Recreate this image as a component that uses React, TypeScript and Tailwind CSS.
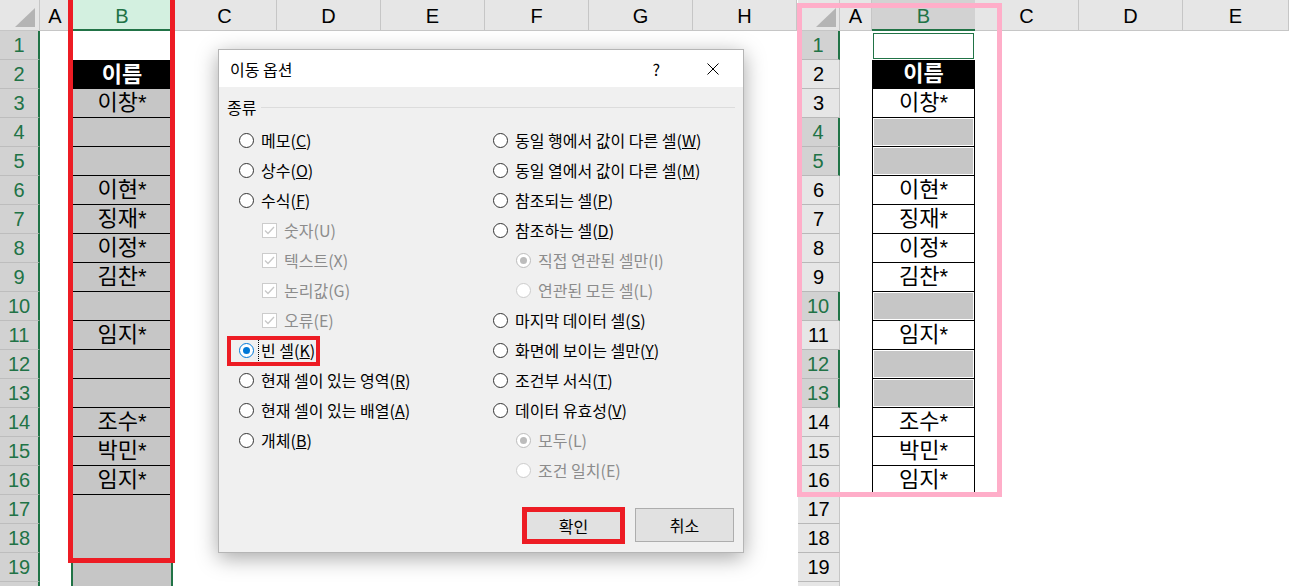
type LeftCell = { kind: 'white' | 'head' | 'gray' | 'sel'; text?: string; line?: boolean };
type RightCell = { kind: 'none' | 'active' | 'head' | 'text' | 'gray'; text?: string };

const leftRows: LeftCell[] = [
  { kind: 'white' },
  { kind: 'head', text: '이름' },
  { kind: 'gray', text: '이창*', line: true },
  { kind: 'gray', line: true },
  { kind: 'gray', line: true },
  { kind: 'gray', text: '이현*', line: true },
  { kind: 'gray', text: '징재*', line: true },
  { kind: 'gray', text: '이정*', line: true },
  { kind: 'gray', text: '김찬*', line: true },
  { kind: 'gray', line: true },
  { kind: 'gray', text: '임지*', line: true },
  { kind: 'gray', line: true },
  { kind: 'gray', line: true },
  { kind: 'gray', text: '조수*', line: true },
  { kind: 'gray', text: '박민*', line: true },
  { kind: 'gray', text: '임지*', line: true },
  { kind: 'gray' },
  { kind: 'gray' },
  { kind: 'sel' },
  { kind: 'sel' },
];

const rightRows: RightCell[] = [
  { kind: 'active' },
  { kind: 'head', text: '이름' },
  { kind: 'text', text: '이창*' },
  { kind: 'gray' },
  { kind: 'gray' },
  { kind: 'text', text: '이현*' },
  { kind: 'text', text: '징재*' },
  { kind: 'text', text: '이정*' },
  { kind: 'text', text: '김찬*' },
  { kind: 'gray' },
  { kind: 'text', text: '임지*' },
  { kind: 'gray' },
  { kind: 'gray' },
  { kind: 'text', text: '조수*' },
  { kind: 'text', text: '박민*' },
  { kind: 'text', text: '임지*' },
  { kind: 'none' },
  { kind: 'none' },
  { kind: 'none' },
  { kind: 'none' },
];

const picked = [1, 4, 5, 10, 12, 13];

// only 19 rows show; the 20th is just the strip under the last line
const rowLabel = (i: number) => (i < 19 ? i + 1 : '');

function Corner({ right }: { right?: boolean }) {
  return (
    <div
      className={`w-[40px] shrink-0 bg-[#e6e6e6] border-b border-r border-[#c6c6c6] flex items-end justify-end pb-[3px] ${
        right ? 'w-[42px] pr-[3px]' : 'pr-[4px]'
      }`}
    >
      <svg width="20" height="19" viewBox="0 0 20 19">
        <polygon points="20,0 20,19 0,19" fill="#b4b4b4" />
      </svg>
    </div>
  );
}

function ColHead({ label, w }: { label: string; w: string }) {
  return (
    <div className={`${w} shrink-0 bg-[#e6e6e6] border-b border-r border-[#c6c6c6] flex items-center justify-center pt-[2px] text-[20px]`}>
      {label}
    </div>
  );
}

function LeftSheet() {
  return (
    <div className="w-[797px] shrink-0 flex flex-col">
      <div className="flex h-[31px] shrink-0">
        <Corner />
        <ColHead label="A" w="w-[31px]" />
        <div className="w-[102px] shrink-0 bg-[#d3f0e0] border-b-2 border-[#217346] text-[#217346] flex items-center justify-center pt-[2px] text-[20px]">
          B
        </div>
        {['C', 'D', 'E', 'F', 'G', 'H'].map((l) => (
          <ColHead key={l} label={l} w="w-[104px]" />
        ))}
      </div>
      {leftRows.map((c, i) => (
        <div key={i} className="flex h-[29px] shrink-0">
          <div className="w-[40px] shrink-0 bg-[#d2d2d2] border-r-2 border-r-[#217346] border-b border-b-[#bdbdbd] flex items-center justify-center text-[20px] text-[#217346]">
            {rowLabel(i)}
          </div>
          <div className="w-[31px] shrink-0" />
          {c.kind === 'white' && <div className="w-[102px] shrink-0 bg-white" />}
          {c.kind === 'head' && (
            <div className="w-[102px] shrink-0 bg-black text-white font-bold flex items-center justify-center text-[22px] leading-none">
              {c.text}
            </div>
          )}
          {c.kind === 'gray' && (
            <div
              className={`w-[102px] shrink-0 bg-[#c6c6c6] flex items-center justify-center text-[22px] leading-none ${
                c.line ? 'border-b border-black' : ''
              }`}
            >
              {c.text}
            </div>
          )}
          {c.kind === 'sel' && <div className="w-[102px] shrink-0 bg-[#c6c6c6] border-x-2 border-[#217346]" />}
          <div className="flex-1" />
        </div>
      ))}
    </div>
  );
}

function RightSheet() {
  return (
    <div className="flex-1 flex flex-col pl-[1px]">
      <div className="flex h-[31px] shrink-0">
        <Corner right />
        <ColHead label="A" w="w-[32px]" />
        <div className="w-[103px] shrink-0 bg-[#d2d2d2] border-b-2 border-[#217346] text-[#217346] flex items-center justify-center pt-[2px] text-[20px]">
          B
        </div>
        <ColHead label="C" w="w-[104px]" />
        <ColHead label="D" w="w-[104px]" />
        <ColHead label="E" w="flex-1" />
      </div>
      {rightRows.map((c, i) => {
        const hi = picked.includes(i + 1);
        return (
          <div key={i} className="flex h-[29px] shrink-0">
            <div
              className={`w-[42px] shrink-0 border-b border-b-[#b8b8b8] flex items-center justify-center text-[20px] ${
                hi
                  ? 'bg-[#d2d2d2] text-[#217346] border-r-2 border-r-[#217346]'
                  : 'bg-[#e6e6e6] text-black border-r border-r-[#c6c6c6]'
              }`}
            >
              {rowLabel(i)}
            </div>
            <div className="w-[32px] shrink-0" />
            {c.kind === 'none' && <div className="w-[103px] shrink-0" />}
            {c.kind === 'active' && (
              <div className="w-[103px] shrink-0 p-[1px] pt-[2px]">
                <div className="h-full border border-[#217346]" />
              </div>
            )}
            {c.kind === 'head' && (
              <div className="w-[103px] shrink-0 bg-black border-x border-b border-black text-white font-bold flex items-center justify-center text-[22px] leading-none">
                {c.text}
              </div>
            )}
            {c.kind === 'text' && (
              <div className="w-[103px] shrink-0 bg-white border-x border-b border-black flex items-center justify-center text-[22px] leading-none">
                {c.text}
              </div>
            )}
            {c.kind === 'gray' && (
              <div className="w-[103px] shrink-0 bg-white border-x border-b border-black p-[1px]">
                <div className="h-full bg-[#c6c6c6]" />
              </div>
            )}
            <div className="flex-1" />
          </div>
        );
      })}
    </div>
  );
}

type RadioState = 'off' | 'on' | 'dison' | 'disoff';

function Radio({ s }: { s: RadioState }) {
  const ring =
    s === 'on'
      ? 'border-[#0078d7]'
      : s === 'off'
        ? 'border-[#333333]'
        : s === 'dison'
          ? 'border-[#bcbcbc]'
          : 'border-[#cccccc]';
  return (
    <span className={`w-[15px] h-[15px] rounded-full border bg-white flex items-center justify-center shrink-0 ${ring}`}>
      {s === 'on' && <span className="w-[7px] h-[7px] rounded-full bg-[#0078d7]" />}
      {s === 'dison' && <span className="w-[7px] h-[7px] rounded-full bg-[#bcbcbc]" />}
    </span>
  );
}

function Check() {
  return (
    <span className="w-[15px] h-[15px] border border-[#cccccc] bg-white flex items-center justify-center shrink-0">
      <svg width="11" height="9" viewBox="0 0 11 9">
        <path d="M1 4.5 L4 7.5 L10 1" fill="none" stroke="#c8c8c8" strokeWidth="1.3" />
      </svg>
    </span>
  );
}

type Opt = { t: string; k: string; kind: 'radio' | 'check' | 'sub'; s?: RadioState; focus?: boolean };

const leftOpts: Opt[] = [
  { t: '메모', k: 'C', kind: 'radio', s: 'off' },
  { t: '상수', k: 'O', kind: 'radio', s: 'off' },
  { t: '수식', k: 'F', kind: 'radio', s: 'off' },
  { t: '숫자', k: 'U', kind: 'check' },
  { t: '텍스트', k: 'X', kind: 'check' },
  { t: '논리값', k: 'G', kind: 'check' },
  { t: '오류', k: 'E', kind: 'check' },
  { t: '빈 셀', k: 'K', kind: 'radio', s: 'on', focus: true },
  { t: '현재 셀이 있는 영역', k: 'R', kind: 'radio', s: 'off' },
  { t: '현재 셀이 있는 배열', k: 'A', kind: 'radio', s: 'off' },
  { t: '개체', k: 'B', kind: 'radio', s: 'off' },
];

const rightOpts: Opt[] = [
  { t: '동일 행에서 값이 다른 셀', k: 'W', kind: 'radio', s: 'off' },
  { t: '동일 열에서 값이 다른 셀', k: 'M', kind: 'radio', s: 'off' },
  { t: '참조되는 셀', k: 'P', kind: 'radio', s: 'off' },
  { t: '참조하는 셀', k: 'D', kind: 'radio', s: 'off' },
  { t: '직접 연관된 셀만', k: 'I', kind: 'sub', s: 'dison' },
  { t: '연관된 모든 셀', k: 'L', kind: 'sub', s: 'disoff' },
  { t: '마지막 데이터 셀', k: 'S', kind: 'radio', s: 'off' },
  { t: '화면에 보이는 셀만', k: 'Y', kind: 'radio', s: 'off' },
  { t: '조건부 서식', k: 'T', kind: 'radio', s: 'off' },
  { t: '데이터 유효성', k: 'V', kind: 'radio', s: 'off' },
  { t: '모두', k: 'L', kind: 'sub', s: 'dison' },
  { t: '조건 일치', k: 'E', kind: 'sub', s: 'disoff' },
];

function OptRow({ o }: { o: Opt }) {
  const dis = o.kind !== 'radio';
  const label = (
    <span className={dis ? 'text-[#8c8c8c]' : 'text-black'}>
      {o.t}({dis ? o.k : <u>{o.k}</u>})
    </span>
  );
  return (
    <div className={`h-[30px] flex items-center ${dis ? 'pl-[23px]' : ''} ${o.focus ? 'gap-[4px]' : 'gap-[7px]'}`}>
      {o.kind === 'check' ? <Check /> : <Radio s={o.s ?? 'off'} />}
      {o.focus ? (
        <span className="h-[25px] px-[2px] border border-dotted border-black flex items-center">{label}</span>
      ) : (
        label
      )}
    </div>
  );
}

function Dialog() {
  return (
    <div className="absolute left-[218px] top-[49px] w-[526px] h-[504px] border border-[#b5b5b5] bg-[#f0f0f0] shadow-[0_5px_20px_rgba(0,0,0,0.35)] flex flex-col font-['Noto_Sans_CJK_KR',sans-serif] text-[16px] leading-[20px] text-black">
      <div className="h-[37px] bg-white flex items-center pl-[11px] pr-[24px] shrink-0">
        <span className="flex-1">이동 옵션</span>
        <span>?</span>
        <svg className="ml-[47px]" width="12" height="12" viewBox="0 0 12 12">
          <path d="M0.5 0.5 L11.5 11.5 M11.5 0.5 L0.5 11.5" stroke="#000" strokeWidth="1" />
        </svg>
      </div>
      <div className="flex-1 flex flex-col pt-[10px]">
        <div className="h-[20px] flex items-center px-[8px]">
          <span>종류</span>
          <span className="flex-1 h-px bg-[#dcdcdc] ml-[5px]" />
        </div>
        <div className="flex mt-[8px] pl-[20px]">
          <div className="w-[254px] shrink-0 flex flex-col">
            {leftOpts.map((o) => (
              <OptRow key={o.t} o={o} />
            ))}
          </div>
          <div className="flex-1 flex flex-col">
            {rightOpts.map((o) => (
              <OptRow key={o.t} o={o} />
            ))}
          </div>
        </div>
        <div className="flex justify-end items-start gap-[10px] pr-[9px] mt-[22px]">
          <button className="w-[103px] h-[37px] border-[5px] border-[#ed1c24] bg-[#e1e1e1] flex items-center justify-center">
            확인
          </button>
          <button className="w-[99px] h-[34px] mt-[1px] border border-[#adadad] bg-[#e1e1e1] flex items-center justify-center">
            취소
          </button>
        </div>
      </div>
      <div className="absolute left-[8px] top-[286px] w-[93px] h-[30px] border-4 border-[#ed1c24]" />
    </div>
  );
}

export default function App() {
  return (
    <div className="relative w-[1289px] h-[586px] overflow-hidden bg-white flex font-['Liberation_Sans','Noto_Sans_CJK_KR',sans-serif]">
      <LeftSheet />
      <RightSheet />
      <div className="absolute left-[68px] top-[-5px] w-[107px] h-[568px] border-[5px] border-[#ed1c24]" />
      <div className="absolute left-[797px] top-[3px] w-[205px] h-[494px] border-[5px] border-[#ffaec9]" />
      <Dialog />
    </div>
  );
}
